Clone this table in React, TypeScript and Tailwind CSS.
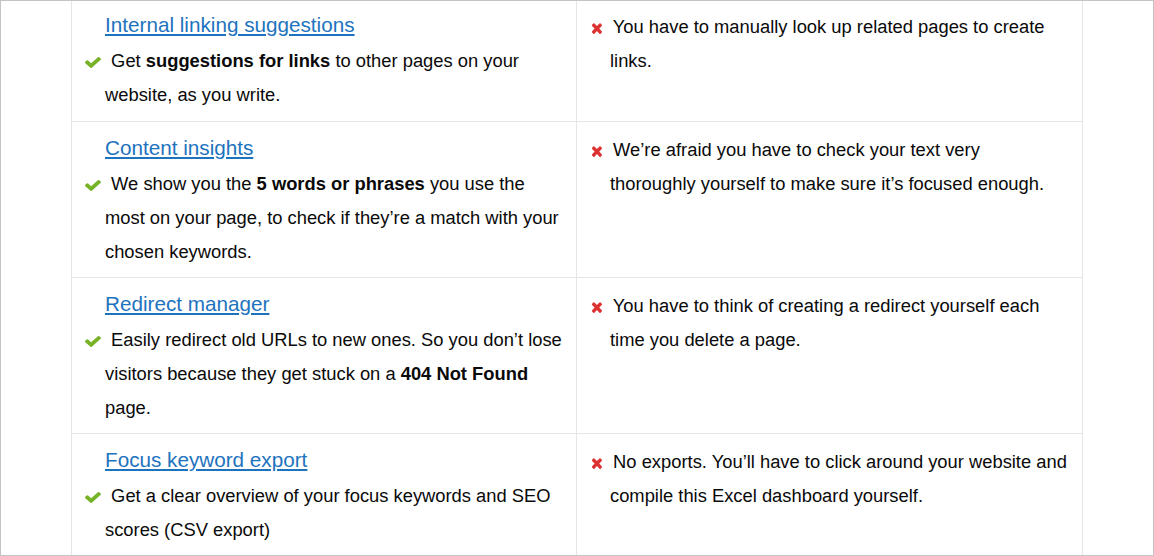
const rows = [
  {
    title: 'Internal linking suggestions',
    pro: (
      <>
        Get <b>suggestions for links</b> to other pages on your website, as you write.
      </>
    ),
    con: 'You have to manually look up related pages to create links.',
  },
  {
    title: 'Content insights',
    pro: (
      <>
        We show you the <b>5 words or phrases</b> you use the most on your page, to check if they’re a match with your chosen keywords.
      </>
    ),
    con: 'We’re afraid you have to check your text very thoroughly yourself to make sure it’s focused enough.',
  },
  {
    title: 'Redirect manager',
    pro: (
      <>
        Easily redirect old URLs to new ones. So you don’t lose visitors because they get stuck on a <b>404 Not Found</b> page.
      </>
    ),
    con: 'You have to think of creating a redirect yourself each time you delete a page.',
  },
  {
    title: 'Focus keyword export',
    pro: 'Get a clear overview of your focus keywords and SEO scores (CSV export)',
    con: 'No exports. You’ll have to click around your website and compile this Excel dashboard yourself.',
  },
];

const Check = () => (
  <svg
    width="16"
    height="11"
    viewBox="121 334 1550 1188"
    preserveAspectRatio="none"
    className="inline-block mr-[5px] align-[-1px]"
  >
    <path
      fill="#77b227"
      d="M1671 566q0 40-28 68l-724 724-136 136q-28 28-68 28t-68-28l-136-136-362-362q-28-28-28-68t28-68l136-136q28-28 68-28t68 28l294 295 656-657q28-28 68-28t68 28l136 136q28 28 28 68z"
    />
  </svg>
);

const Cross = () => (
  <svg
    width="12"
    height="12"
    viewBox="82 240 1408 1314"
    preserveAspectRatio="none"
    className="inline-block mr-[6px] align-[-1px]"
  >
    <path
      fill="#dc3232"
      d="M1490 1322q0 40-28 68l-136 136q-28 28-68 28t-68-28l-294-294-294 294q-28 28-68 28t-68-28l-136-136q-28-28-28-68t28-68l294-294-294-294q-28-28-28-68t28-68l136-136q28-28 68-28t68 28l294 294 294-294q28-28 68-28t68 28l136 136q28 28 28 68t-28 68l-294 294 294 294q28 28 28 68z"
    />
  </svg>
);

export default function App() {
  return (
    <div
      className="w-[1154px] h-[556px] overflow-hidden border border-[#c4c4c4] bg-white text-[18.35px] text-[#0a0a0a]"
      style={{ fontFamily: '"Liberation Sans", Arial, sans-serif' }}
    >
      <div className="mx-[70px] border-x border-[#e5e5e5]">
        {rows.map((row, i) => (
          <div key={row.title} className="flex border-b border-[#e5e5e5]">
            <div
              className={`w-[505px] shrink-0 border-r border-[#e5e5e5] pl-[33px] pr-[10px] ${
                i === 0 ? 'pt-[7px] pb-[9px]' : 'pt-[9px] pb-[8px]'
              }`}
            >
              <a
                href="#"
                className="block text-[20.7px] leading-[34px] text-[#1e73be] underline mb-[2px]"
              >
                {row.title}
              </a>
              <p className="leading-[34px] -indent-[20px]">
                <Check /> {row.pro}
              </p>
            </div>
            <div
              className={`flex-1 pl-[33px] pr-[12px] pb-[8px] ${i === 0 ? 'pt-[9px]' : 'pt-[11px]'}`}
            >
              <p className="leading-[34px] -indent-[20px]">
                <Cross /> {row.con}
              </p>
            </div>
          </div>
        ))}
      </div>
    </div>
  );
}
